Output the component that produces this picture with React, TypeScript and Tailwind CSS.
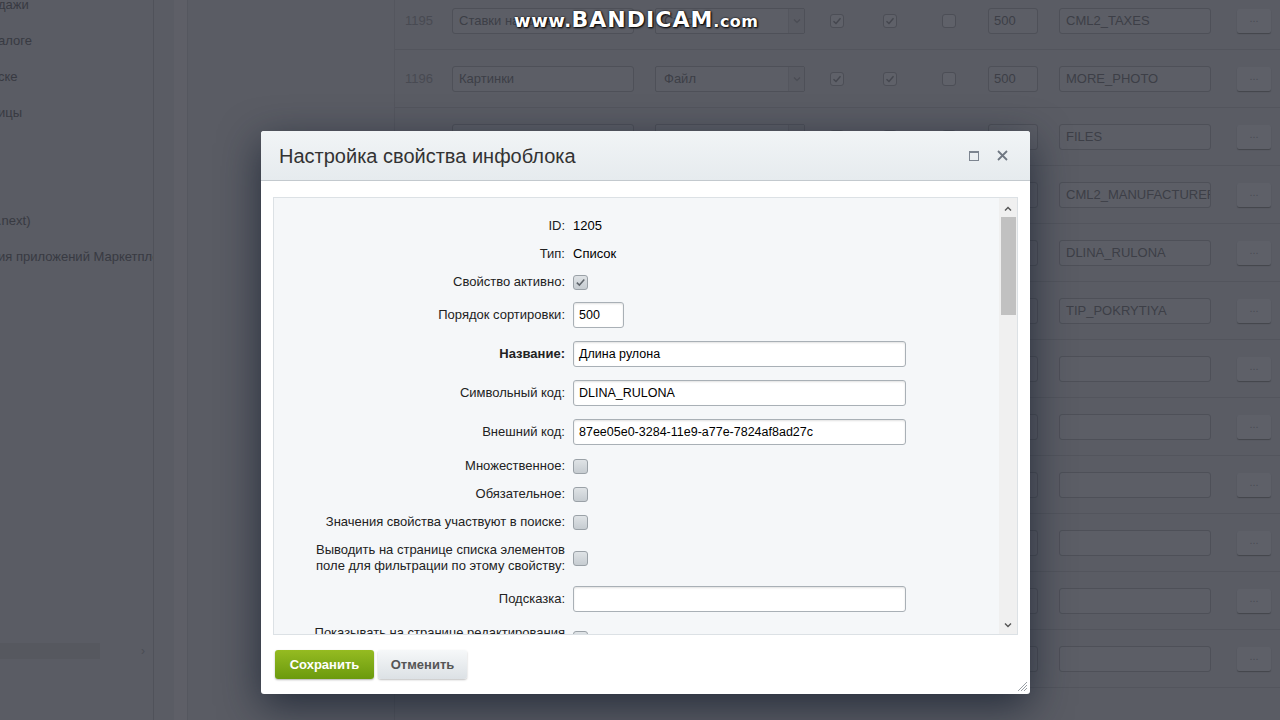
import React from "react";

const font = { fontFamily: '"Liberation Sans", Arial, sans-serif' };

type Row = { id: string; name: string; type: string; c1: boolean; c2: boolean; c3: boolean; sort: string; code: string };

const rows: Row[] = [
  { id: "1195", name: "Ставки налогов", type: "Строка", c1: true, c2: true, c3: false, sort: "500", code: "CML2_TAXES" },
  { id: "1196", name: "Картинки", type: "Файл", c1: true, c2: true, c3: false, sort: "500", code: "MORE_PHOTO" },
  { id: "1197", name: "Файлы", type: "Файл", c1: true, c2: true, c3: false, sort: "500", code: "FILES" },
  { id: "1198", name: "Производитель", type: "Список", c1: true, c2: true, c3: false, sort: "500", code: "CML2_MANUFACTURER" },
  { id: "1205", name: "Длина рулона", type: "Список", c1: true, c2: true, c3: false, sort: "500", code: "DLINA_RULONA" },
  { id: "1206", name: "Тип покрытия", type: "Список", c1: true, c2: true, c3: false, sort: "500", code: "TIP_POKRYTIYA" },
  { id: "", name: "", type: "Строка", c1: true, c2: false, c3: false, sort: "500", code: "" },
  { id: "", name: "", type: "Строка", c1: true, c2: false, c3: false, sort: "500", code: "" },
  { id: "", name: "", type: "Строка", c1: true, c2: false, c3: false, sort: "500", code: "" },
  { id: "", name: "", type: "Строка", c1: true, c2: false, c3: false, sort: "500", code: "" },
  { id: "", name: "", type: "Строка", c1: true, c2: false, c3: false, sort: "500", code: "" },
  { id: "", name: "", type: "Строка", c1: true, c2: false, c3: false, sort: "500", code: "" },
];

function DimCheck({ on }: { on: boolean }) {
  return (
    <div className="w-[14px] h-[14px] rounded-[3px] border border-[#4c4e56] bg-[#5f6169] flex items-center justify-center">
      {on && (
        <svg width="10" height="10" viewBox="0 0 10 10">
          <path d="M1.5 5.2 L4 7.5 L8.5 2.2" stroke="#44464e" strokeWidth="1.4" fill="none" />
        </svg>
      )}
    </div>
  );
}

function BgRow({ r }: { r: Row }) {
  return (
    <div className="flex items-center h-[58px] border-b border-[#53555d] text-[13px] text-[#3d3f47]">
      <div className="w-[57px] pl-[10px] text-[#484a52]">{r.id}</div>
      <div className="w-[182px] h-[26px] rounded-[3px] border border-[#4e5058] bg-[#5c5e66] px-[6px] flex items-center overflow-hidden whitespace-nowrap">{r.name}</div>
      <div className="ml-[21px] w-[150px] h-[26px] rounded-[2px] border border-[#4e5058] bg-[#5c5e66] flex items-center">
        <span className="flex-1 px-[8px]">{r.type}</span>
        <span className="w-[16px] h-full border-l border-[#54565e] bg-[#595b63] flex items-center justify-center">
          <svg width="8" height="6" viewBox="0 0 8 6"><path d="M1 1.5 L4 4.5 L7 1.5" stroke="#4a4c54" strokeWidth="1.2" fill="none" /></svg>
        </span>
      </div>
      <div className="ml-[25px]"><DimCheck on={r.c1} /></div>
      <div className="ml-[39px]"><DimCheck on={r.c2} /></div>
      <div className="ml-[45px]"><DimCheck on={r.c3} /></div>
      <div className="ml-[32px] w-[50px] h-[26px] rounded-[3px] border border-[#4e5058] bg-[#5c5e66] px-[5px] flex items-center">{r.sort}</div>
      <div className="ml-[21px] w-[152px] h-[26px] rounded-[3px] border border-[#4e5058] bg-[#5c5e66] px-[6px] flex items-center whitespace-nowrap overflow-hidden">{r.code}</div>
      <div className="ml-[26px] w-[34px] h-[24px] rounded-[2px] bg-[#5e6068] shadow-[0_1px_1px_rgba(0,0,0,0.25)] flex items-center justify-center text-[11px] text-[#4a4c54] leading-none pb-[4px]">...</div>
    </div>
  );
}

function Check({ on }: { on?: boolean }) {
  return (
    <div className="w-[15px] h-[15px] rounded-[3px] border border-[#9aa1a7] bg-gradient-to-b from-[#dfe3e6] to-[#c6ccd1] flex items-center justify-center">
      {on && (
        <svg width="11" height="11" viewBox="0 0 11 11">
          <path d="M1.8 5.6 L4.4 8.1 L9.3 2.6" stroke="#5f656b" strokeWidth="1.5" fill="none" />
        </svg>
      )}
    </div>
  );
}

function Input({ value, w }: { value: string; w: string }) {
  return (
    <div className={`${w} h-[26px] rounded-[3px] border border-[#a9b0b6] bg-white shadow-[inset_0_1px_2px_rgba(0,0,0,0.12)] px-[5px] flex items-center text-[12.5px] text-black whitespace-nowrap`}>
      {value}
    </div>
  );
}

function FormRow({ h, label, bold, children }: { h: string; label: React.ReactNode; bold?: boolean; children?: React.ReactNode }) {
  return (
    <div className={`flex items-center shrink-0 ${h}`}>
      <div className={`w-[291px] text-right text-[13px] leading-[16px] text-[#222] ${bold ? "font-bold" : ""}`}>{label}</div>
      <div className="ml-[8px] flex items-center text-[13px] text-black">{children}</div>
    </div>
  );
}

export default function App() {
  return (
    <div className="relative w-[1280px] h-[720px] overflow-hidden bg-[#5a5c64] flex" style={font}>
      {/* left menu */}
      <div className="w-[154px] shrink-0 h-full border-r border-[#50525a] relative text-[13px] text-[#383a42]">
        <div className="flex flex-col -mt-[13px]">
          {["дажи", "алоге", "ске", "ицы", "", "", ".next)", "ия приложений Маркетплейс"].map((t, i) => (
            <div key={i} className="h-[36px] flex items-center whitespace-nowrap overflow-hidden -ml-[2px]">{t}</div>
          ))}
        </div>
        <div className="absolute left-0 top-[643px] w-[100px] h-[16px] bg-[#56585f]" />
        <div className="absolute left-[141px] top-[642px] text-[12px] text-[#4a4c54]">›</div>
      </div>
      <div className="w-[20px] shrink-0 h-full" />
      <div className="w-[14px] shrink-0 h-full bg-[#5e5f67] border-r border-[#55575f]" />
      {/* main area */}
      <div className="flex-1 h-full pl-[206px]">
        <div className="-mt-[8px] border-l border-[#54565e] h-[740px]">
          {rows.map((r, i) => (
            <BgRow key={i} r={r} />
          ))}
        </div>
      </div>

      {/* watermark */}
      <div className="absolute left-[514px] top-[3px] text-white whitespace-nowrap [text-shadow:0_0_2px_#000,1px_1px_2px_#000]" style={{ fontFamily: '"DejaVu Sans", sans-serif' }}>
        <span className="text-[18px] font-bold tracking-[0.5px]">www.</span>
        <span className="text-[22px] font-bold tracking-[1px]">BANDICAM</span>
        <span className="text-[16px] font-bold tracking-[0.5px]">.com</span>
      </div>

      {/* dialog */}
      <div className="absolute left-[261px] top-[131px] w-[769px] h-[563px] rounded-[3px] bg-white shadow-[0_12px_40px_rgba(20,30,45,0.75)] flex flex-col">
        <div className="h-[50px] shrink-0 rounded-t-[3px] bg-gradient-to-b from-[#f1f4f6] to-[#e6ebee] border-b border-[#c3c9ce] flex items-center pl-[18px] pr-[22px]">
          <div className="flex-1 text-[20px] text-[#333]">Настройка свойства инфоблока</div>
          <div className="w-[10px] h-[10px] border border-[#7d8590] border-t-2 mr-[18px]" />
          <svg width="11" height="11" viewBox="0 0 11 11">
            <path d="M1 1 L10 10 M10 1 L1 10" stroke="#6f7782" strokeWidth="1.8" />
          </svg>
        </div>
        <div className="mt-[16px] mx-[12px] h-[438px] shrink-0 border border-[#dce1e5] bg-[#f5f7f9] flex overflow-hidden">
          <div className="flex-1 pt-[14px] flex flex-col">
            <FormRow h="h-[28px]" label="ID:">1205</FormRow>
            <FormRow h="h-[28px]" label="Тип:">Список</FormRow>
            <FormRow h="h-[28px]" label="Свойство активно:"><Check on /></FormRow>
            <FormRow h="h-[38px]" label="Порядок сортировки:"><Input value="500" w="w-[51px]" /></FormRow>
            <FormRow h="h-[40px]" label="Название:" bold><Input value="Длина рулона" w="w-[333px]" /></FormRow>
            <FormRow h="h-[38px]" label="Символьный код:"><Input value="DLINA_RULONA" w="w-[333px]" /></FormRow>
            <FormRow h="h-[40px]" label="Внешний код:"><Input value="87ee05e0-3284-11e9-a77e-7824af8ad27c" w="w-[333px]" /></FormRow>
            <FormRow h="h-[28px]" label="Множественное:"><Check /></FormRow>
            <FormRow h="h-[28px]" label="Обязательное:"><Check /></FormRow>
            <FormRow h="h-[28px]" label="Значения свойства участвуют в поиске:"><Check /></FormRow>
            <FormRow h="h-[44px]" label={<>Выводить на странице списка элементов<br />поле для фильтрации по этому свойству:</>}><Check /></FormRow>
            <FormRow h="h-[38px]" label="Подсказка:"><Input value="" w="w-[333px]" /></FormRow>
            <div className="flex items-start shrink-0 h-[44px] pt-[7px]">
              <div className="w-[291px] text-right text-[13px] leading-[16px] text-[#222]">Показывать на странице редактирования<br />элемента поле для фильтрации</div>
              <div className="ml-[8px] pt-[6px]"><Check /></div>
            </div>
          </div>
          {/* scrollbar */}
          <div className="w-[18px] shrink-0 bg-[#f0f0f0] flex flex-col items-center">
            <svg width="10" height="14" viewBox="0 0 10 14" className="mt-[4px]">
              <path d="M2 8.5 L5 5.5 L8 8.5" stroke="#555" strokeWidth="1.4" fill="none" />
            </svg>
            <div className="mt-[1px] w-[15px] h-[98px] bg-[#c1c1c1]" />
            <div className="flex-1" />
            <svg width="10" height="14" viewBox="0 0 10 14" className="mb-[2px]">
              <path d="M2 5.5 L5 8.5 L8 5.5" stroke="#555" strokeWidth="1.4" fill="none" />
            </svg>
          </div>
        </div>
        <div className="flex items-start pl-[14px] pt-[15px] gap-[4px] flex-1 relative">
          <div className="w-[99px] h-[29px] rounded-[3px] bg-gradient-to-b from-[#95bb21] to-[#6b9a0d] shadow-[0_1px_2px_rgba(0,0,0,0.3)] flex items-center justify-center text-[13px] font-bold text-white">Сохранить</div>
          <div className="w-[89px] h-[29px] rounded-[3px] bg-gradient-to-b from-[#f6f8f9] to-[#dce1e5] shadow-[0_1px_2px_rgba(0,0,0,0.25)] flex items-center justify-center text-[13px] font-bold text-[#555]">Отменить</div>
          <svg width="12" height="12" viewBox="0 0 12 12" className="absolute right-[2px] bottom-[2px]">
            <path d="M11 2 L2 11 M11 5 L5 11 M11 8 L8 11" stroke="#9aa0a6" strokeWidth="1" />
          </svg>
        </div>
      </div>
    </div>
  );
}
